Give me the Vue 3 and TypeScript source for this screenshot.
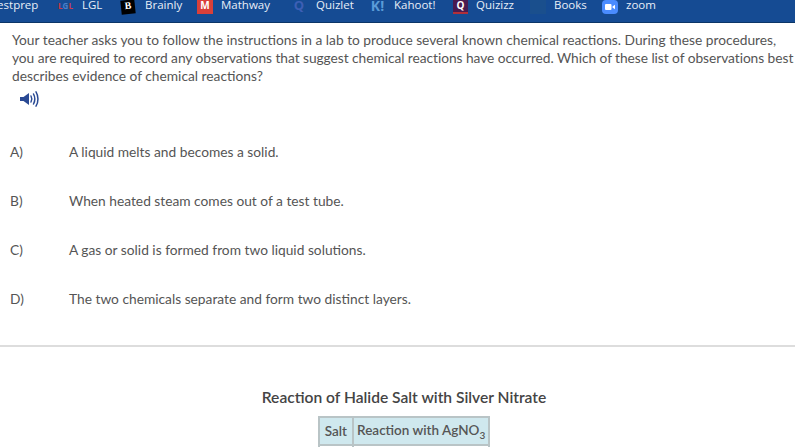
<template>
  <div class="page">
    <nav class="bookmarks">
      <a v-for="b in bookmarks" :key="b.name" class="bookmark" :style="{ width: b.width + 'px' }">
        <span v-if="b.icon !== 'none'" class="bm-icon" :class="b.icon">
          <template v-if="b.icon === 'lgl'">L<i>G</i>L</template>
          <template v-else>{{ b.glyph }}</template>
          <svg v-if="b.icon === 'zoom'" width="16" height="14" viewBox="0 0 16 14">
            <rect x="3" y="4" width="6.500" height="6" rx="1" fill="#fff" />
            <path d="M10.500 6.500 13 4.800v4.400l-2.500-1.700z" fill="#fff" />
          </svg>
        </span>
        <span class="bm-name">{{ b.name }}</span>
      </a>
    </nav>

    <section class="question">
      <p class="stem">
        Your teacher asks you to follow the instructions in a lab to produce several known chemical reactions. During these procedures,<br />
        <span class="tight">you are required to record any observations that suggest chemical reactions have occurred. Which of these list of observations best</span><br />
        describes evidence of chemical reactions?
      </p>
      <svg class="speaker" width="20" height="18" viewBox="0 0 20 18">
        <path d="M1 7h3.500L10 3v12l-5.500-4H1z" fill="#2a4a94" />
        <path d="M12 6c1 1.800 1 4.200 0 6M14.500 4c1.600 3 1.600 7 0 10M17 1.800c2.600 4.200 2.600 10.200 0 14.400" fill="none" stroke="#2a4a94" stroke-width="1.500" stroke-linecap="round" />
      </svg>
    </section>

    <ul class="answers">
      <li v-for="a in answers" :key="a.letter" class="answer">
        <span class="letter">{{ a.letter }})</span>
        <span>{{ a.text }}</span>
      </li>
    </ul>

    <hr class="divider" />

    <section class="reference">
      <h3>Reaction of Halide Salt with Silver Nitrate</h3>
      <table>
        <thead>
          <tr>
            <th>Salt</th>
            <th>Reaction with AgNO<sub>3</sub></th>
          </tr>
        </thead>
        <tbody>
          <tr><td></td><td></td></tr>
        </tbody>
      </table>
    </section>
  </div>
</template>

<script setup lang="ts">
const bookmarks = [
  { name: 'testprep', icon: 'none', glyph: '', width: 64 },
  { name: 'LGL', icon: 'lgl', glyph: '', width: 64 },
  { name: 'Brainly', icon: 'brainly', glyph: 'B', width: 76 },
  { name: 'Mathway', icon: 'mathway', glyph: 'M', width: 93 },
  { name: 'Quizlet', icon: 'quizlet', glyph: 'Q', width: 79 },
  { name: 'Kahoot!', icon: 'kahoot', glyph: 'K!', width: 84 },
  { name: 'Quizizz', icon: 'quizizz', glyph: 'Q', width: 77 },
  { name: 'Books', icon: 'books', glyph: '', width: 72 },
  { name: 'zoom', icon: 'zoom', glyph: '', width: 70 },
]

const answers = [
  { letter: 'A', text: 'A liquid melts and becomes a solid.' },
  { letter: 'B', text: 'When heated steam comes out of a test tube.' },
  { letter: 'C', text: 'A gas or solid is formed from two liquid solutions.' },
  { letter: 'D', text: 'The two chemicals separate and form two distinct layers.' },
]
</script>

<style>
html, body {
  margin: 0;
  overflow: hidden;
  background: #fff;
}
</style>

<style scoped>
.page {
  width: 795px;
  height: 447px;
  overflow: hidden;
  font-family: Lato, sans-serif;
  font-size: 13.75px;
  color: #555;
}

.bookmarks {
  display: flex;
  height: 22px;
  margin-left: -7px;
  background: #154b93;
  border-bottom: 1px solid #0b3567;
  color: #e8eef7;
  font-family: "Open Sans", sans-serif;
  font-size: 11.5px;
  line-height: 10px;
  overflow: hidden;
}

.bookmark {
  display: flex;
  flex: none;
  gap: 8px;
  height: 10px;
}

.bm-icon {
  flex: none;
  width: 16px;
  height: 14px;
  font-size: 10px;
  font-weight: 700;
  line-height: 11px;
  text-align: center;
}

.bm-icon.lgl { color: #c93a45; font-size: 8px; width: 17px; }
.bm-icon.lgl i { color: #4a7fc9; font-style: normal; }
.bm-icon.brainly { background: #000; color: #fff; transform: rotate(-6deg); width: 14px; margin-right: 2px; font-family: "Liberation Serif", serif; }
.bm-icon.mathway { background: #d9403a; color: #fff; }
.bm-icon.quizlet { color: #3d5fb5; font-size: 13px; width: 18px; }
.bm-icon.kahoot { color: #5a9bd8; font-size: 14px; width: 17px; }
.bm-icon.quizizz { background: #4a1a4f; color: #fff; border-bottom: 2px solid #b0303a; height: 12px; width: 15px; }
.bm-icon.books { background: #1a4f8d; }
.bm-icon.zoom { background: #4a8cff; border-radius: 4px; }

.question {
  padding: 8px 0 0 12px;
}

.stem {
  margin: 0;
  line-height: 18px;
  white-space: nowrap;
}

.tight {
  letter-spacing: -0.05px;
}

.speaker {
  display: block;
  margin: 5px 0 0 7px;
}

.answers {
  list-style: none;
  margin: 35px 0 0;
  padding: 0 0 0 10px;
}

.answer {
  display: flex;
  height: 49px;
  line-height: 18px;
}

.letter {
  width: 59px;
  flex: none;
}

.divider {
  margin: 6px 0 0;
  border: 0;
  border-top: 2px solid #ddd;
}

.reference {
  display: flex;
  flex-direction: column;
  align-items: center;
  padding-left: 13px;
}

h3 {
  margin: 40px 0 0;
  font-size: 15.6px;
  font-weight: 600;
  line-height: 20px;
  color: #444;
}

table {
  margin-top: 9px;
  border-collapse: collapse;
  border: 2px solid #b9c4c6;
}

th, td {
  padding: 0 3px;
  height: 26px;
  border: 2px solid #b9c4c6;
  font-size: 13.5px;
  font-weight: 600;
  color: #555;
}

th:first-child {
  padding: 0 5px;
}

th {
  background: #cfe8ee;
}

sub {
  font-size: 10px;
}
</style>
